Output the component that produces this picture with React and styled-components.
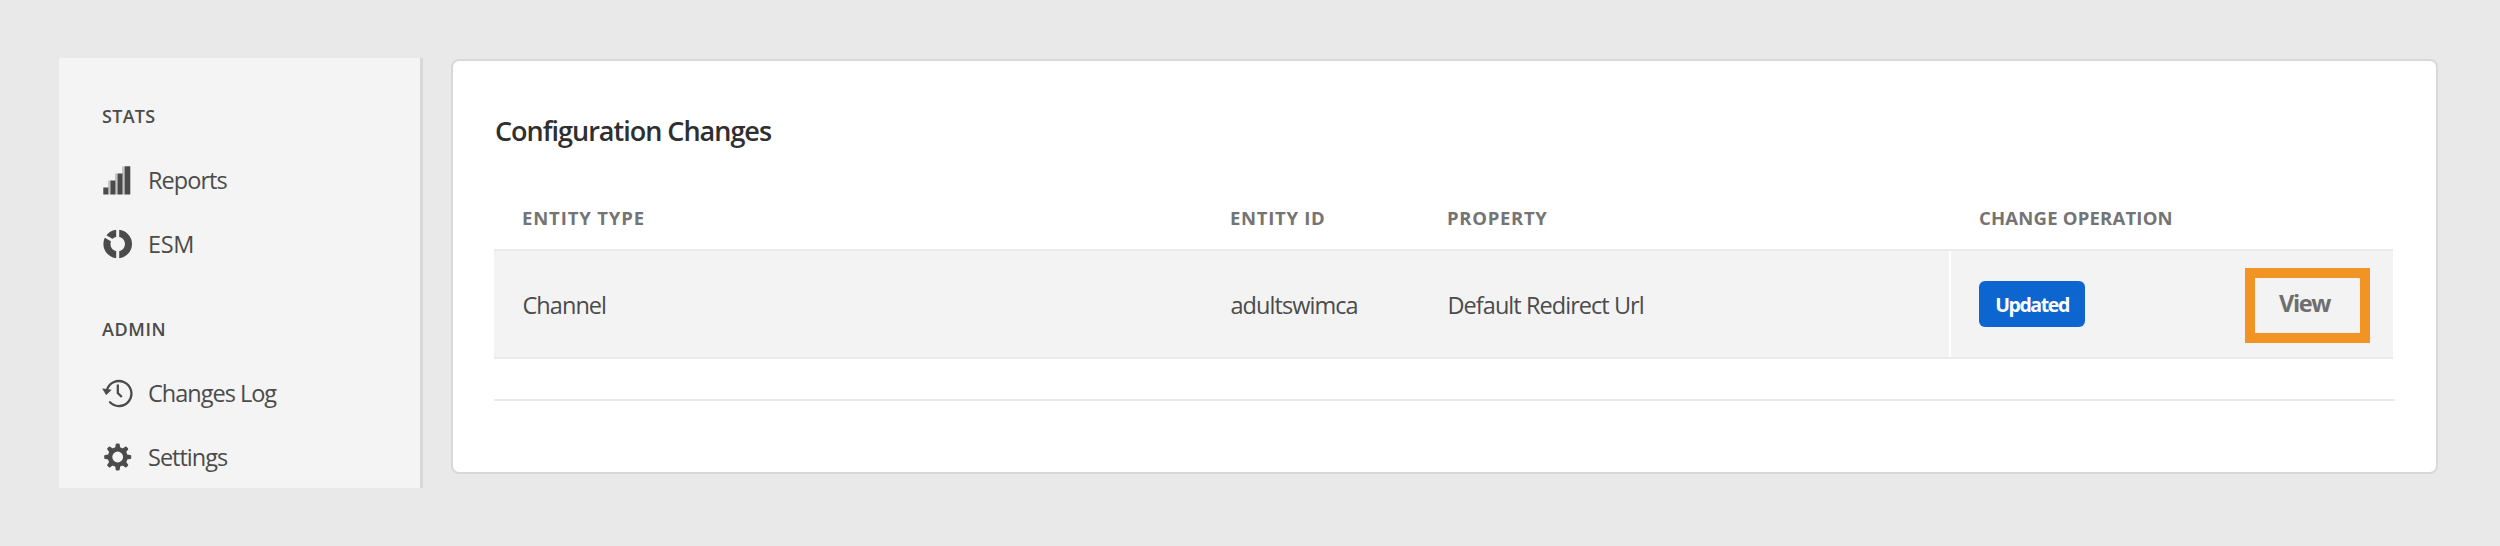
import React from "react";
import styled, { createGlobalStyle } from "styled-components";

const GlobalStyle = createGlobalStyle`
  * { box-sizing: border-box; }
  body {
    margin: 0;
    background: #e9e9e9;
    font-family: "Open Sans", "Noto Sans", sans-serif;
    color: #4b4b4b;
  }
`;

const Page = styled.div`
  display: flex;
  align-items: flex-start;
  gap: 28px;
  width: 2500px;
  height: 546px;
  padding: 58px 62px 0 59px;
  overflow: hidden;
`;

const Sidebar = styled.nav`
  display: flex;
  flex-direction: column;
  gap: 41px;
  flex: none;
  width: 364px;
  height: 430px;
  padding: 46px 0 0 44px;
  overflow: hidden;
  background: #f4f4f4;
  border-right: 3px solid #d8d8d8;
`;

const Section = styled.section`
  flex: none;
`;

const SectionTitle = styled.h2`
  margin: 0 0 20px -1px;
  font-size: 18px;
  line-height: 24px;
  font-weight: 600;
  letter-spacing: ${(p) => p.$spacing || 0}px;
`;

const NavItem = styled.a`
  display: flex;
  align-items: center;
  gap: 15px;
  height: 64px;
  font-size: 23.5px;
  font-weight: 450;
  letter-spacing: ${(p) => p.$spacing || 0}px;
  white-space: nowrap;
`;

const Icon = styled.svg`
  display: block;
  flex: none;
  width: 30px;
  height: 30px;
  overflow: visible;
`;

const Card = styled.main`
  flex: 1;
  height: 415px;
  margin-top: 1px;
  padding: 40px 41px 0;
  background: #fff;
  border: 2px solid #d8d8d8;
  border-radius: 8px;
`;

const Title = styled.h1`
  margin: 0 0 39px 1px;
  font-size: 27px;
  line-height: 60px;
  height: 60px;
  font-weight: 600;
  letter-spacing: -1px;
  color: #2f2f2f;
`;

const HeadRow = styled.div`
  display: grid;
  grid-template-columns: 708px 217px 532px 1fr;
  height: 49px;
  padding-left: 28px;
  line-height: 36px;
  font-size: 18.5px;
  font-weight: 700;
  color: #747474;
  white-space: nowrap;
`;

const HeadCell = styled.span`
  letter-spacing: ${(p) => p.$spacing || 0}px;
`;

const BodyRow = styled.div`
  display: grid;
  grid-template-columns: 708px 217px 502px 1fr;
  align-items: stretch;
  height: 110px;
  margin-right: 2px;
  padding-left: 28px;
  border-top: 2px solid #eaeaea;
  border-bottom: 2px solid #eaeaea;
  background: #f3f3f3;
`;

const Cell = styled.div`
  display: flex;
  align-items: center;
  padding: 1px 0 0 0.500px;
  font-size: 23.5px;
  font-weight: 450;
  letter-spacing: ${(p) => p.$spacing || 0}px;
  white-space: nowrap;
`;

const OperationCell = styled.div`
  display: flex;
  align-items: center;
  justify-content: space-between;
  padding: 0 23px 0 28px;
  border-left: 2px solid #fff;
`;

const Badge = styled.span`
  display: flex;
  align-items: center;
  justify-content: center;
  width: 106px;
  height: 46px;
  border-radius: 6px;
  background: #0d66d0;
  color: #fff;
  font-size: 19.5px;
  font-weight: 700;
  letter-spacing: -1.4px;
`;

const ViewButton = styled.button`
  display: flex;
  align-items: center;
  justify-content: center;
  width: 125px;
  height: 75px;
  margin-top: 3px;
  padding: 0 6px 6px 0;
  border: 10px solid #f29423;
  background: transparent;
  color: #6e6e6e;
  font-family: inherit;
  font-size: 23.5px;
  font-weight: 700;
  letter-spacing: -1.4px;
`;

const Divider = styled.hr`
  height: 2px;
  margin: 40px 0 0;
  border: 0;
  background: #eaeaea;
`;

const ReportsIcon = () => (
  <Icon viewBox="0 0 30 30">
    <path fill="#c4c4c4" d="M5 15.500h3v14H5zM12 8.500h3v21h-3zM19 1.500h3v28h-3z" />
    <path fill="#4b4b4b" d="M.3 22.500h5v7H.3zM7.500 15.500h4.900v14H7.500zM14.600 8.500h4.900v21h-4.900zM21.700 1.300h5.600v28.200h-5.600z" />
  </Icon>
);

const EsmIcon = () => (
  <Icon viewBox="0 0 30 30">
    <circle cx="14.700" cy="15" r="10.800" fill="none" stroke="#4b4b4b" strokeWidth="7" />
    <path d="M14.700 -1V31M12 13L0 6" stroke="#f4f4f4" strokeWidth="3" fill="none" />
  </Icon>
);

const HistoryIcon = () => (
  <Icon viewBox="0 0 30 30" fill="none" stroke="#4b4b4b">
    <path d="M3.800 12.500A12.500 12.500 0 1 1 7 24.300" strokeWidth="2.300" strokeLinecap="round" />
    <path d="M-.3 10.800L8.200 12L3.200 16.800Z" fill="#4b4b4b" strokeWidth=".6" strokeLinejoin="round" />
    <path d="M14.800 6.500V15L18.800 19" strokeWidth="2.300" />
  </Icon>
);

const GearIcon = () => (
  <Icon viewBox="-14.7 -15 30 30">
    <circle r="7.700" fill="none" stroke="#4b4b4b" strokeWidth="4.600" />
    {[0, 45, 90, 135, 180, 225, 270, 315].map((angle) => (
      <path
        key={angle}
        transform={`rotate(${angle})`}
        d="M-2.500 -9L-2 -12.600Q-1.800 -13.500 -1 -13.500H1Q1.800 -13.500 2 -12.600L2.500 -9Z"
        fill="#4b4b4b"
      />
    ))}
  </Icon>
);

export default function App() {
  return (
    <>
      <GlobalStyle />
      <Page>
        <Sidebar>
          <Section>
            <SectionTitle $spacing={0.3}>STATS</SectionTitle>
            <NavItem $spacing={-0.95}><ReportsIcon />Reports</NavItem>
            <NavItem $spacing={-0.4}><EsmIcon />ESM</NavItem>
          </Section>
          <Section>
            <SectionTitle $spacing={0.6}>ADMIN</SectionTitle>
            <NavItem $spacing={-1}><HistoryIcon />Changes Log</NavItem>
            <NavItem $spacing={-1}><GearIcon />Settings</NavItem>
          </Section>
        </Sidebar>
        <Card>
          <Title>Configuration Changes</Title>
          <HeadRow>
            <HeadCell $spacing={0.85}>ENTITY TYPE</HeadCell>
            <HeadCell $spacing={0.7}>ENTITY ID</HeadCell>
            <HeadCell $spacing={0.7}>PROPERTY</HeadCell>
            <HeadCell $spacing={0.2}>CHANGE OPERATION</HeadCell>
          </HeadRow>
          <BodyRow>
            <Cell $spacing={-0.95}>Channel</Cell>
            <Cell $spacing={-0.95}>adultswimca</Cell>
            <Cell $spacing={-0.95}>Default Redirect Url</Cell>
            <OperationCell>
              <Badge>Updated</Badge>
              <ViewButton>View</ViewButton>
            </OperationCell>
          </BodyRow>
          <Divider />
        </Card>
      </Page>
    </>
  );
}
